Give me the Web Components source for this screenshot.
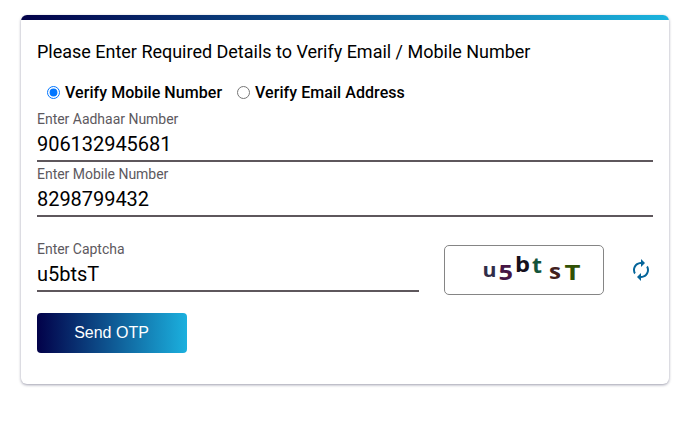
<!DOCTYPE html>
<html lang="en"><head><meta charset="utf-8"><title>Verify Email / Mobile Number</title>
<style>
body{margin:0;box-sizing:border-box;min-height:425px;padding:15px 28px 0 21px;background:#fff;font-family:Roboto,sans-serif;color:#000}
.captcha{display:flex;align-items:flex-start;margin-top:20px}
.captcha text-field{flex:none;width:382px}
captcha-image{margin:4px 0 0 25px}
refresh-button{margin:17px 0 0 25px}
send-button{margin-top:17px}
</style></head><body>
<verify-card>
<span slot="title">Please Enter Required Details to Verify Email / Mobile Number</span>
<radio-group>
<radio-option checked style="width:190px">Verify Mobile Number</radio-option>
<radio-option>Verify Email Address</radio-option>
</radio-group>
<text-field label="Enter Aadhaar Number" value="906132945681"></text-field>
<text-field label="Enter Mobile Number" value="8298799432"></text-field>
<div class="captcha">
<text-field label="Enter Captcha" value="u5btsT"></text-field>
<captcha-image></captcha-image>
<refresh-button></refresh-button>
</div>
<send-button>Send OTP</send-button>
</verify-card>
<script>
const define=(name,html,setup)=>customElements.define(name,class extends HTMLElement{
 constructor(){super();this.attachShadow({mode:'open'})}
 connectedCallback(){this.shadowRoot.innerHTML=html;if(setup)setup(this,this.shadowRoot)}
});
define('verify-card',`<style>
:host{display:block;box-sizing:border-box;height:369px;border-radius:6px;overflow:hidden;background:#fff;box-shadow:0 1px 3px rgba(10,10,50,.4)}
.bar{height:5px;background:linear-gradient(90deg,#020149,#1bb4de)}
.body{padding:19px 16px 0}
h1{margin:0 0 19px;font-size:18px;line-height:26px;font-weight:400;letter-spacing:-.012px;white-space:nowrap}
</style><div class="bar"></div><div class="body"><h1><slot name="title"></slot></h1><slot></slot></div>`);
define('radio-group',`<style>:host{display:flex;height:18px;margin-bottom:9px;padding-left:10px}</style><slot></slot>`);
define('radio-option',`<style>
:host{display:block}
label{display:flex;align-items:flex-start;gap:5px;font-size:16px;line-height:18px;font-weight:500;letter-spacing:.06px;white-space:nowrap}
input{width:13px;height:13px;margin:2px 0 0}
</style><label><input type="radio"><span><slot></slot></span></label>`,(h,r)=>{r.querySelector('input').checked=h.hasAttribute('checked')});
define('text-field',`<style>
:host{display:block;box-sizing:border-box;height:55px}
label{display:block;height:16px;line-height:16px;font-size:14px;letter-spacing:-.02px;color:#5d595e}
.value{height:33px;line-height:35px;font-size:20px;letter-spacing:-.04px;border-bottom:2px solid #5e575c}
</style><label></label><div class="value"></div>`,(h,r)=>{r.querySelector('label').textContent=h.getAttribute('label');r.querySelector('.value').textContent=h.getAttribute('value')});
define('captcha-image',`<style>
:host{display:block;box-sizing:border-box;width:160px;height:50px;border:1px solid #858585;border-radius:5px}
svg{display:block}text{font:700 21px "Open Sans",sans-serif}
</style><svg width="158" height="48" viewBox="445 246 158 48">
<text x="482.5" y="277" fill="#302d49" style="font-size:20px" textLength="14" lengthAdjust="spacingAndGlyphs">u</text><text x="498.5" y="280" fill="#461545" textLength="14.500" lengthAdjust="spacingAndGlyphs">5</text><text x="515" y="271.500" fill="#15101c" textLength="15" lengthAdjust="spacingAndGlyphs">b</text><text x="532" y="273" fill="#13543b" textLength="10" lengthAdjust="spacingAndGlyphs">t</text><text x="549" y="279" fill="#42211e" textLength="12" lengthAdjust="spacingAndGlyphs">s</text><text x="564.5" y="280" fill="#315105" textLength="16" lengthAdjust="spacingAndGlyphs">T</text></svg>`);
define('refresh-button',`<style>:host,svg{display:block}</style><svg width="24" height="24" viewBox="0 0 24 24" fill="#05659a"><path d="M12 6v3l4-4-4-4v3c-4.42 0-8 3.58-8 8 0 1.57.46 3.03 1.24 4.26L6.7 14.8A5.87 5.87 0 0 1 6 12c0-3.31 2.69-6 6-6zm6.76 1.74L17.3 9.2c.44.84.7 1.79.7 2.8 0 3.31-2.69 6-6 6v-3l-4 4 4 4v-3c4.42 0 8-3.58 8-8 0-1.57-.46-3.03-1.24-4.26z"/></svg>`);
define('send-button',`<style>:host{display:block}
button{display:block;width:150px;height:40px;padding:0 1px 0 0;border:0;border-radius:4px;background:linear-gradient(90deg,#020149,#1bb0de);color:#fff;font:400 16px/38px "Liberation Sans",Arial,sans-serif}
</style><button><slot></slot></button>`);
</script></body></html>
